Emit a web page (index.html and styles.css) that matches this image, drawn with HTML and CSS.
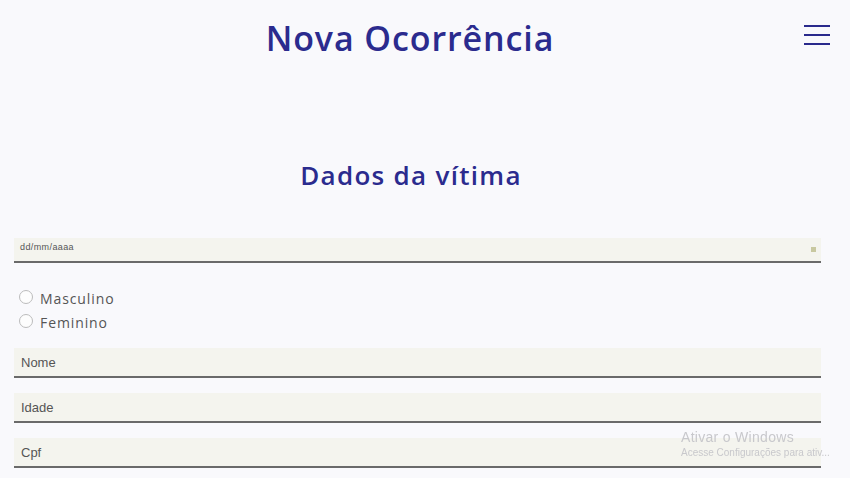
FILE: index.html
```html
<!DOCTYPE html>
<html lang="pt-BR">
<head>
<meta charset="utf-8">
<title>Nova Ocorrência</title>
<link rel="stylesheet" href="styles.css">
</head>
<body>
<header class="topbar">
  <h1 class="title">Nova Ocorrência</h1>
  <button class="menu" aria-label="menu">
    <svg width="28" height="22" viewBox="0 0 28 22"><path d="M1 2H27M1 11H27M1 20H27" stroke="#2a2a8c" stroke-width="2.2" fill="none"/></svg>
  </button>
</header>
<main class="form">
  <h2 class="section">Dados da vítima</h2>
  <div class="field date">
    <span class="ph small">dd/mm/aaaa</span>
    <span class="cal"></span>
  </div>
  <div class="radios">
    <label class="radio"><span class="dot"></span>Masculino</label>
    <label class="radio"><span class="dot"></span>Feminino</label>
  </div>
  <div class="field first"><span class="ph">Nome</span></div>
  <div class="field"><span class="ph">Idade</span></div>
  <div class="field"><span class="ph">Cpf</span></div>
</main>
<div class="watermark">
  <div class="wm1">Ativar o Windows</div>
  <div class="wm2">Acesse Configurações para ativ...</div>
</div>
</body>
</html>
```
FILE: styles.css
```css
html, body {
  margin: 0;
  padding: 0;
  background: #f9f9fc;
  height: 100%;
  overflow: hidden;
}
body {
  font-family: "Open Sans", "Liberation Sans", sans-serif;
}
.topbar {
  position: relative;
  height: 80px;
  display: flex;
  justify-content: center;
  padding-right: 30px;
}
.title {
  margin: 16px 0 0;
  font-size: 34px;
  font-weight: 600;
  color: #2b2b8e;
  letter-spacing: 0.9px;
  line-height: 44px;
}
.menu {
  position: absolute;
  right: 19px;
  top: 24px;
  background: none;
  border: 0;
  padding: 0;
  line-height: 0;
}
.form {
  padding-left: 14px;
  width: 807px;
}
.section {
  margin: 78px 0 0;
  text-align: center;
  font-size: 26px;
  font-weight: 600;
  color: #2b2b8e;
  line-height: 34px;
  letter-spacing: 1.3px;
  padding-right: 13px;
}
.field {
  height: 28px;
  background: #f4f4ee;
  border-bottom: 2px solid #6a6a6a;
  display: flex;
  align-items: center;
  justify-content: space-between;
  padding: 0 7px;
  margin-top: 15px;
}
.field.first {
  margin-top: 16px;
}
.field.date {
  height: 23px;
  margin-top: 46px;
  padding-left: 6px;
}
.ph {
  font-family: "Liberation Sans", Arial, sans-serif;
  font-size: 13px;
  color: #555;
}
.ph.small {
  font-size: 9px;
  letter-spacing: 0.4px;
  margin-top: -5px;
}
.cal {
  width: 5px;
  height: 5px;
  background: #c8c8a0;
  margin-right: -2px;
}
.radios {
  margin-top: 27px;
  margin-bottom: 6px;
  display: flex;
  flex-direction: column;
  gap: 6px;
  padding-left: 5px;
}
.radio {
  display: flex;
  align-items: center;
  gap: 7px;
  font-size: 14px;
  color: #555;
  line-height: 18px;
  letter-spacing: 0.9px;
}
.dot {
  width: 12px;
  height: 12px;
  border: 1px solid #bcbcbc;
  border-radius: 50%;
  background: #fdfdfd;
  margin-top: -4px;
}
.watermark {
  position: fixed;
  left: 681px;
  top: 429px;
  color: #c8c8cc;
  font-family: "Liberation Sans", Arial, sans-serif;
  line-height: 1.2;
}
.wm1 { font-size: 14px; letter-spacing: 0.3px; }
.wm2 { font-size: 10px; margin-top: 1px; white-space: nowrap; }
```
